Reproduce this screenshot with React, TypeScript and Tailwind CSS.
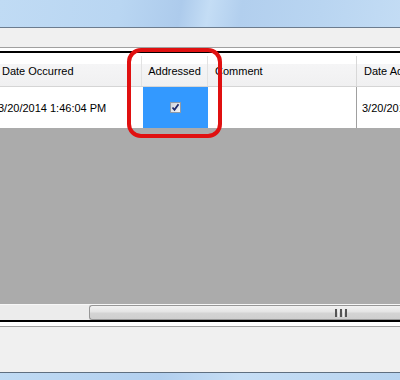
import React from "react";

export default function App() {
  const font = { fontFamily: '"Liberation Sans", Arial, sans-serif' };
  return (
    <div className="relative w-[400px] h-[380px] overflow-hidden bg-[#f0f0f0] text-[11px] text-black flex flex-col" style={font}>
      {/* title bar */}
      <div className="h-[28px] shrink-0 border-b border-[#6c7c8e] bg-[linear-gradient(100deg,#c0dbf4_0%,#b9d6f2_30%,#adcbec_45%,#c4ddf5_52%,#b2cfee_60%,#b9d5f1_80%,#c3dcf4_100%)]" />
      {/* toolbar strip */}
      <div className="h-[20px] shrink-0 bg-[#f0f0f0] border-b border-[#a0a0a0]" />
      <div className="h-[3px] shrink-0 bg-white" />
      {/* grid */}
      <div className="flex flex-col border-t-2 border-b-2 border-black h-[271px] shrink-0">
        {/* header */}
        <div className="flex h-[34px] shrink-0 pt-[3px] border-b border-[#d5d5d5] bg-[linear-gradient(to_bottom,#ffffff_0%,#ffffff_32%,#f5f5f6_33%,#f0f0f1_100%)]">
          <div className="w-[142px] shrink-0 flex items-center pl-[2px] border-r border-[#e2e2e2]">Date Occurred</div>
          <div className="w-[66px] shrink-0 flex items-center justify-center border-r border-[#e2e2e2]">Addressed</div>
          <div className="w-[149px] shrink-0 flex items-center pl-[7px] border-r border-[#d8d8d8]">Comment</div>
          <div className="flex-1 flex items-center pl-[7px] whitespace-nowrap overflow-hidden">Date Added</div>
        </div>
        {/* data row */}
        <div className="flex h-[41px] shrink-0 bg-white pt-[1px]">
          <div className="w-[143px] shrink-0 flex items-center overflow-hidden">
            <span className="ml-[-2px] whitespace-nowrap">3/20/2014 1:46:04 PM</span>
          </div>
          <div className="w-[65px] shrink-0 flex items-center justify-center bg-[#3399ff] mt-[-1px]">
            <div className="w-[11px] h-[11px] border border-[#8e9aa8] bg-[linear-gradient(135deg,#cfd4dc,#f4f5f7)] flex items-center justify-center">
              <svg width="9" height="9" viewBox="0 0 9 9">
                <path d="M1.5 4.5 L3.5 6.8 L7.5 1.2" stroke="#1d2b6e" strokeWidth="1.8" fill="none" />
              </svg>
            </div>
          </div>
          <div className="w-[149px] shrink-0 border-r border-[#a0a0a0] mt-[-1px]" />
          <div className="flex-1 flex items-center pl-[5px] whitespace-nowrap overflow-hidden">3/20/2014 1:46:04 PM</div>
        </div>
        {/* empty area */}
        <div className="flex-1 bg-[#ababab]" />
        {/* horizontal scrollbar */}
        <div className="h-[16px] shrink-0 flex bg-[#ececec] border-t border-[#f7f7f7]">
          <div className="w-[89px] shrink-0" />
          <div className="flex-1 rounded-l-[3px] border border-r-0 border-[#979797] bg-[linear-gradient(to_bottom,#f2f2f2_0%,#e4e4e4_45%,#d4d4d4_55%,#cfcfcf_100%)] flex items-center">
            <div className="ml-[245px] flex gap-[1px]">
              <div className="w-[2px] h-[8px] bg-[#555]" />
              <div className="w-[1px] h-[8px] bg-[#eee]" />
              <div className="w-[2px] h-[8px] bg-[#555]" />
              <div className="w-[1px] h-[8px] bg-[#eee]" />
              <div className="w-[2px] h-[8px] bg-[#555]" />
            </div>
          </div>
        </div>
      </div>
      <div className="h-[4px] shrink-0 bg-white" />
      <div className="flex-1 bg-[#f0f0f0] border-t border-[#a0a0a0]" />
      {/* bottom frame */}
      <div className="h-[8px] shrink-0 border-t border-[#5f6f80] bg-[linear-gradient(100deg,#c0dbf4_0%,#b2cfee_40%,#c6def5_60%,#b8d4f0_100%)]" />
      {/* red highlight */}
      <div className="absolute left-[127px] top-[48px] w-[95px] h-[90px] border-[4px] border-[#e01010] rounded-[14px]" />
    </div>
  );
}
